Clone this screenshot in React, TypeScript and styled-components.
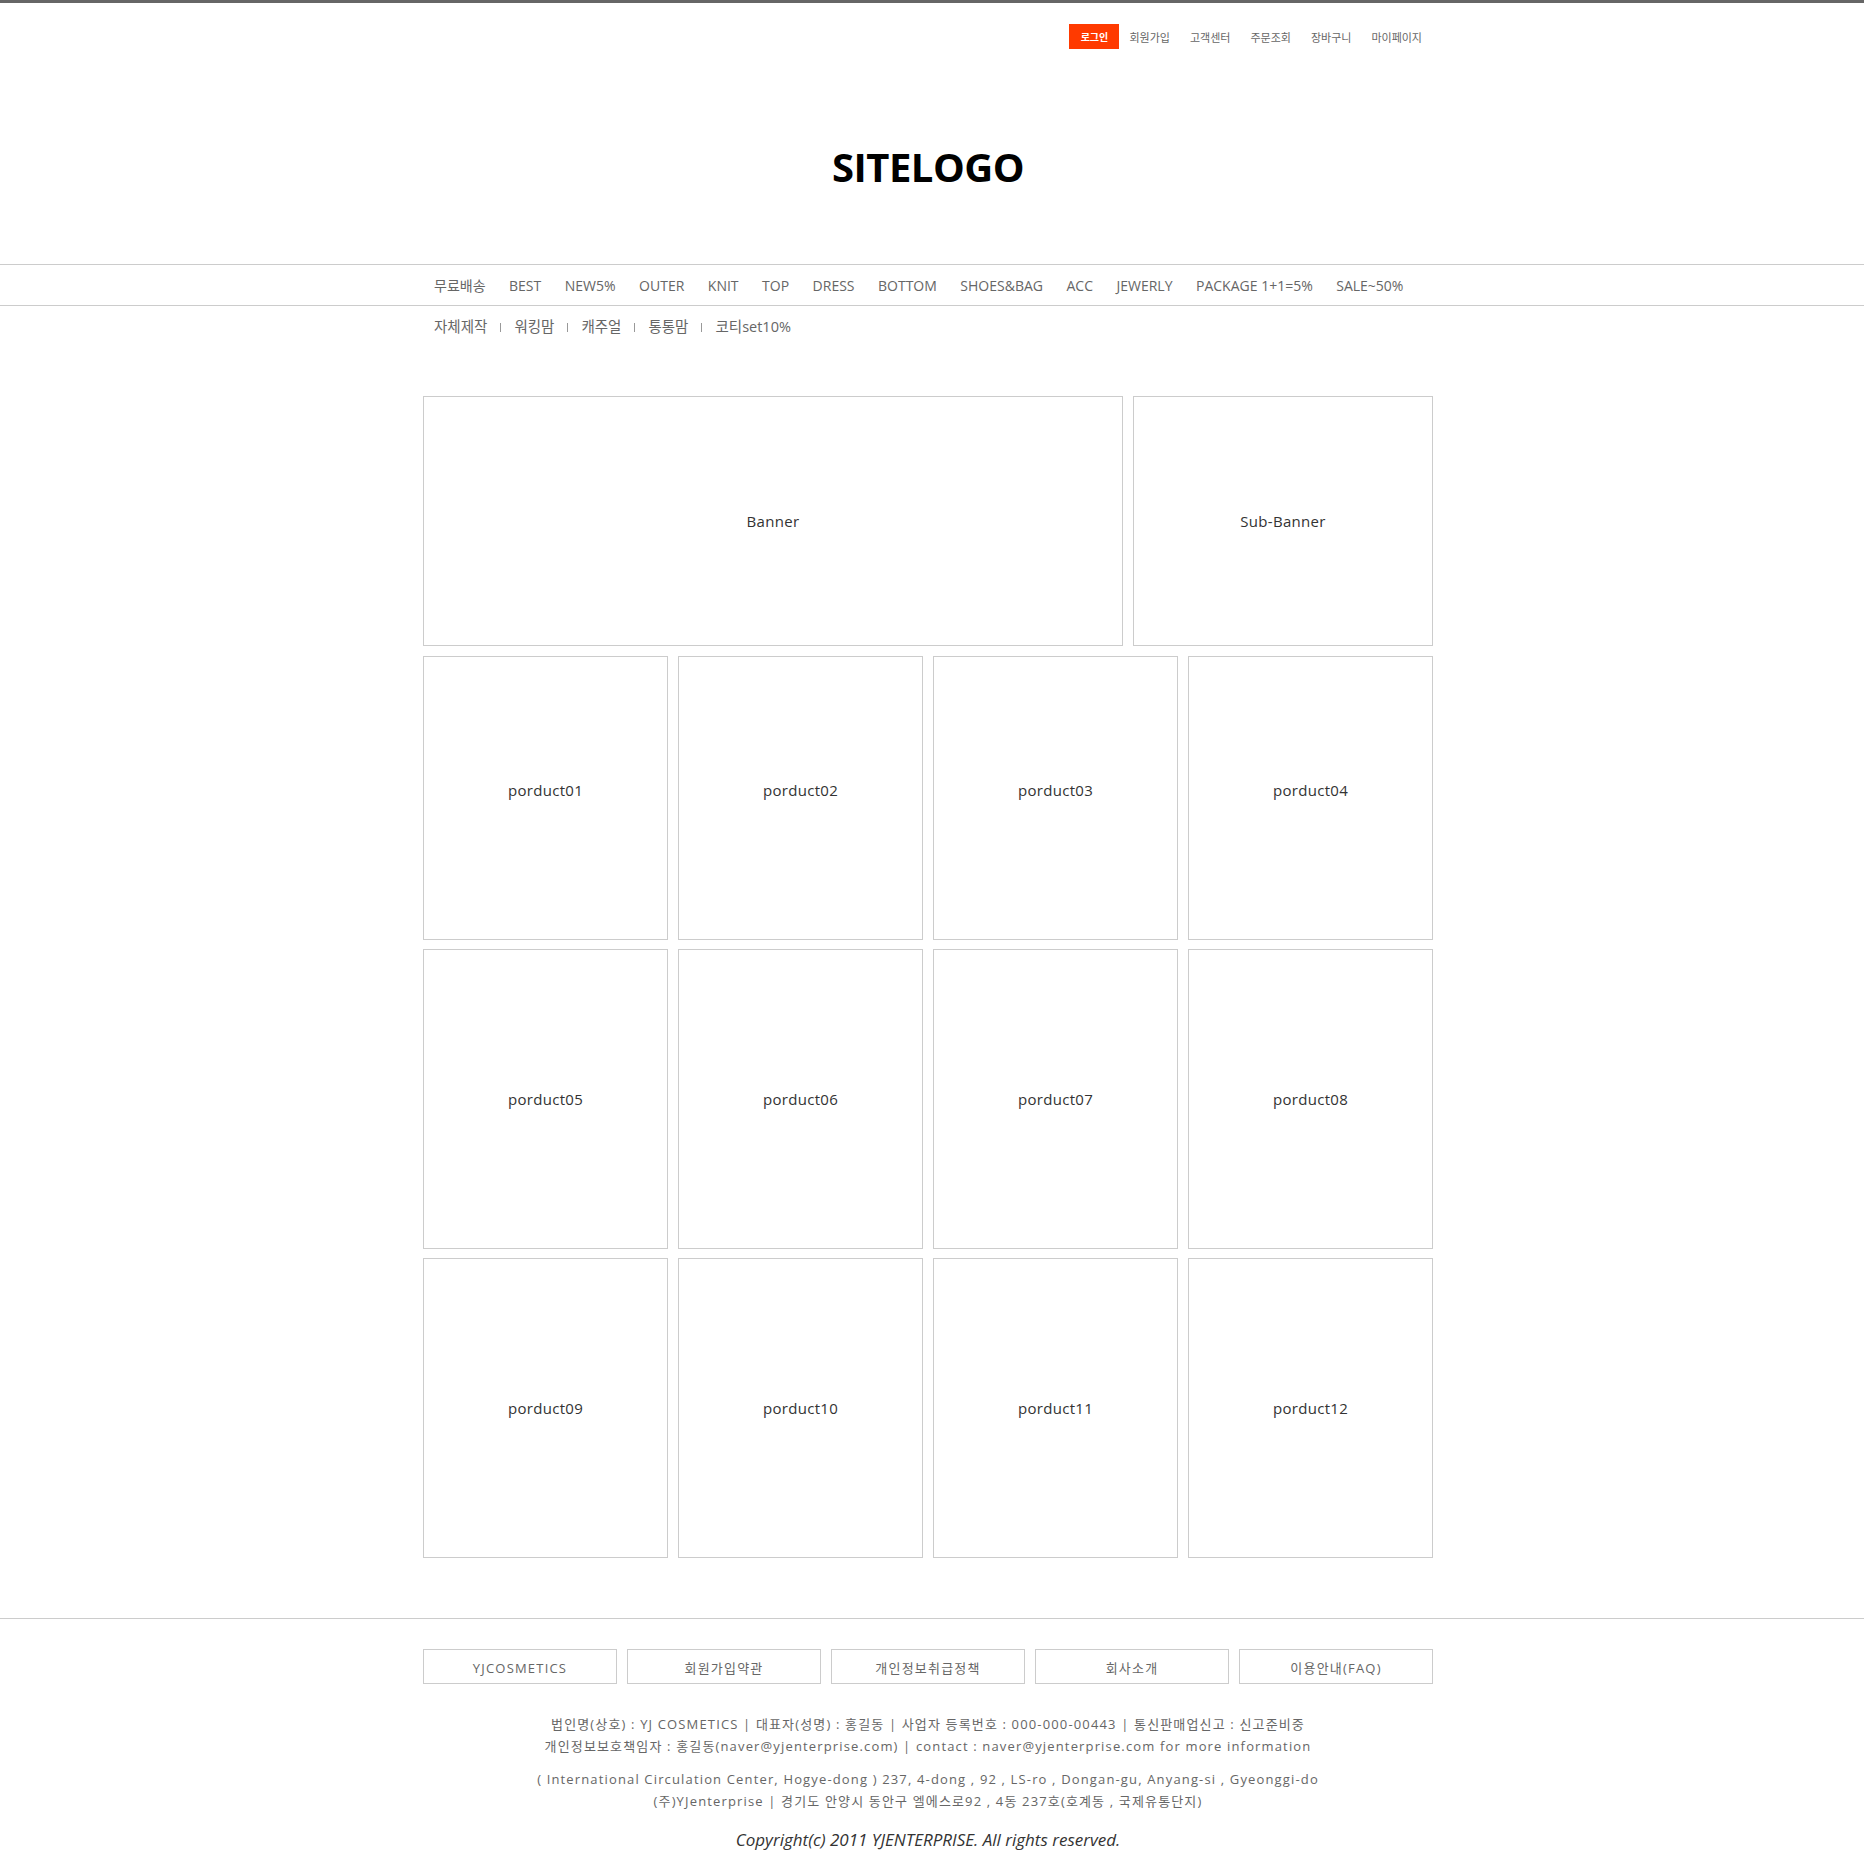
import React from "react";
import styled, { createGlobalStyle } from "styled-components";

const GlobalStyle = createGlobalStyle`
  html, body {
    margin: 0;
    padding: 0;
    background: #fff;
  }
  body {
    font-family: "Open Sans", "Noto Sans CJK KR", sans-serif;
    color: #333;
  }
  * { box-sizing: border-box; }
  ul { list-style: none; margin: 0; padding: 0; }
  a { text-decoration: none; color: inherit; }
`;

const Page = styled.div`
  border-top: 3px solid #666;
  min-height: 1856px;
`;

const Inner = styled.div`
  width: 1010px;
  margin-left: calc(50% - 509px);
`;

const UtilBar = styled(Inner)`
  display: flex;
  justify-content: flex-end;
  align-items: center;
  padding-top: 21px;
  padding-right: 11px;
  height: 46px;
`;

const UtilLink = styled.a<{ $active?: boolean }>`
  display: flex;
  align-items: center;
  justify-content: center;
  height: 25px;
  font-size: ${(p) => (p.$active ? "10px" : "11px")};
  color: ${(p) => (p.$active ? "#fff" : "#666")};
  background: ${(p) => (p.$active ? "#ff3a00" : "transparent")};
  width: ${(p) => (p.$active ? "50px" : "auto")};
  font-weight: ${(p) => (p.$active ? 700 : 400)};
  margin-left: 20px;
  &:first-child { margin-left: 0; }
  &:nth-child(2) { margin-left: 10px; }
`;

const LogoArea = styled.div`
  height: 215px;
  padding-top: 20px;
  padding-right: 8px;
  display: flex;
  align-items: center;
  justify-content: center;
`;

const Logo = styled.h1`
  margin: 0;
  font-family: "Open Sans", sans-serif;
  font-weight: 700;
  font-size: 40px;
  line-height: 1;
  color: #000;
  letter-spacing: -0.5px;
`;

const NavBar = styled.nav`
  border-top: 1px solid #ccc;
  border-bottom: 1px solid #ccc;
`;

const NavList = styled(Inner).attrs({ as: "ul" })`
  display: flex;
  height: 40px;
  align-items: center;
`;

const NavItem = styled.li`
  font-size: 14px;
  color: #666;
  padding: 0 11px;
  margin-right: 1.5px;
  white-space: nowrap;
`;

const SubNav = styled(Inner).attrs({ as: "ul" })`
  display: flex;
  align-items: flex-start;
  padding: 12px 0 0 11px;
  height: 30px;
`;

const SubItem = styled.li`
  font-size: 14.5px;
  line-height: 18px;
  color: #666;
  display: flex;
  align-items: center;
  &:not(:first-child)::before {
    content: "";
    display: inline-block;
    width: 1px;
    height: 9px;
    background: #999;
    margin: 0 13px;
  }
`;

const Main = styled(Inner).attrs({ as: "main" })`
  margin-top: 60px;
  display: flex;
  flex-direction: column;
  gap: 10px;
`;

const BannerRow = styled.div`
  display: grid;
  grid-template-columns: 700px 300px;
  gap: 10px;
  height: 250px;
`;

const Box = styled.div<{ $lift?: number }>`
  border: 1px solid #ccc;
  display: flex;
  align-items: center;
  justify-content: center;
  padding-bottom: ${(p) => p.$lift ?? 0}px;
  font-size: 15px;
  letter-spacing: 0.3px;
  color: #333;
`;

const ProductGrid = styled.div`
  display: grid;
  grid-template-columns: repeat(4, 245px);
  grid-template-rows: 284px 300px 300px;
  gap: 9px 10px;
`;

const Footer = styled.footer`
  margin-top: 60px;
  border-top: 1px solid #ccc;
  padding-top: 30px;
  padding-bottom: 4px;
`;

const FooterMenu = styled(Inner).attrs({ as: "ul" })`
  display: grid;
  grid-template-columns: repeat(5, 194px);
  gap: 10px;
`;

const FooterButton = styled.li`
  height: 35px;
  border: 1px solid #ccc;
  display: flex;
  align-items: center;
  justify-content: center;
  font-size: 13px;
  letter-spacing: 1.2px;
  color: #666;
  padding-top: 2px;
`;

const Info = styled.p<{ $gap: number }>`
  margin: ${(p) => p.$gap}px 0 0;
  padding-right: 8px;
  text-align: center;
  font-size: 13px;
  line-height: 22px;
  letter-spacing: 1.15px;
  color: #666;
`;

const Copyright = styled.p`
  margin: 17px 0 0;
  padding-right: 8px;
  text-align: center;
  font-size: 17px;
  line-height: 22px;
  font-style: italic;
  color: #333;
`;

const utilLinks = ["로그인", "회원가입", "고객센터", "주문조회", "장바구니", "마이페이지"];
const navItems = [
  "무료배송",
  "BEST",
  "NEW5%",
  "OUTER",
  "KNIT",
  "TOP",
  "DRESS",
  "BOTTOM",
  "SHOES&BAG",
  "ACC",
  "JEWERLY",
  "PACKAGE 1+1=5%",
  "SALE~50%",
];
const subItems = ["자체제작", "워킹맘", "캐주얼", "통통맘", "코티set10%"];
const products = Array.from({ length: 12 }, (_, i) => `porduct${String(i + 1).padStart(2, "0")}`);
const footerMenu = ["YJCOSMETICS", "회원가입약관", "개인정보취급정책", "회사소개", "이용안내(FAQ)"];

export default function App() {
  return (
    <Page>
      <GlobalStyle />
      <header>
        <UtilBar>
          {utilLinks.map((l, i) => (
            <UtilLink key={l} $active={i === 0} href="#">
              {l}
            </UtilLink>
          ))}
        </UtilBar>
        <LogoArea>
          <Logo>SITELOGO</Logo>
        </LogoArea>
        <NavBar>
          <NavList>
            {navItems.map((n) => (
              <NavItem key={n}>{n}</NavItem>
            ))}
          </NavList>
        </NavBar>
        <SubNav>
          {subItems.map((s) => (
            <SubItem key={s}>{s}</SubItem>
          ))}
        </SubNav>
      </header>
      <Main>
        <BannerRow>
          <Box>Banner</Box>
          <Box>Sub-Banner</Box>
        </BannerRow>
        <ProductGrid>
          {products.map((p, i) => (
            <Box key={p} $lift={i < 4 ? 16 : 0}>
              {p}
            </Box>
          ))}
        </ProductGrid>
      </Main>
      <Footer>
        <FooterMenu>
          {footerMenu.map((f) => (
            <FooterButton key={f}>{f}</FooterButton>
          ))}
        </FooterMenu>
        <Info $gap={29}>
          법인명(상호) : YJ COSMETICS | 대표자(성명) : 홍길동 | 사업자 등록번호 : 000-000-00443 | 통신판매업신고 : 신고준비중
          <br />
          개인정보보호책임자 : 홍길동(naver@yjenterprise.com) | contact : naver@yjenterprise.com for more information
        </Info>
        <Info $gap={11}>
          ( International Circulation Center, Hogye-dong ) 237, 4-dong , 92 , LS-ro , Dongan-gu, Anyang-si , Gyeonggi-do
          <br />
          (주)YJenterprise | 경기도 안양시 동안구 엘에스로92 , 4동 237호(호계동 , 국제유통단지)
        </Info>
        <Copyright>Copyright(c) 2011 YJENTERPRISE. All rights reserved.</Copyright>
      </Footer>
    </Page>
  );
}
